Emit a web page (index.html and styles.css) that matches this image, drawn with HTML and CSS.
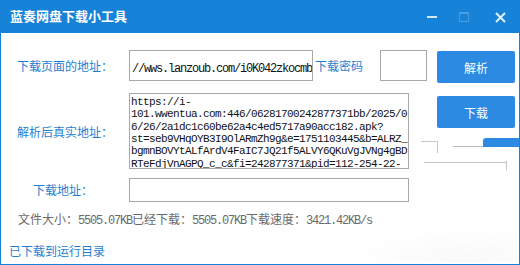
FILE: index.html
```html
<!DOCTYPE html>
<html lang="zh-CN">
<head>
<meta charset="utf-8">
<title>蓝奏网盘下载小工具</title>
<link rel="stylesheet" href="styles.css">
</head>
<body>
<div class="window">
  <header class="titlebar">
    <span class="title">蓝奏网盘下载小工具</span>
    <div class="controls">
      <svg class="ctl ctl-min" width="10" height="10" viewBox="0 0 10 10"><rect x="0" y="4" width="10" height="2" fill="#d3e8f8"/></svg>
      <svg class="ctl ctl-max" width="10" height="10" viewBox="0 0 10 10"><rect x="0.5" y="0.5" width="9" height="9" fill="none" stroke="#4b9de0"/><rect x="0" y="0" width="10" height="2" fill="#4b9de0"/></svg>
      <svg class="ctl ctl-close" width="11" height="11" viewBox="0 0 11 11"><path d="M1 1 L10 10 M10 1 L1 10" stroke="#e2f1fc" stroke-width="2"/></svg>
    </div>
  </header>
  <main class="content">
    <div class="row row-url">
      <span class="label label-wide">下载页面的地址：</span>
      <div class="field field-url"><span class="mono">//wws.lanzoub.com/i0K042zkocmb</span></div>
      <span class="pwd-label">下载密码</span>
      <div class="field field-pwd"></div>
      <button class="btn btn-parse">解析</button>
    </div>
    <div class="row row-real">
      <span class="label label-wide">解析后真实地址：</span>
      <div class="field field-real mono-small">https://i-<br>101.wwentua.com:446/06281700242877371bb/2025/0<br>6/26/2a1dc1c60be62a4c4ed5717a90acc182.apk?<br>st=seb9VHqOYB3I9OlARmZh9g&amp;e=1751103445&amp;b=ALRZ_<br>bgmnBOVYtALfArdV4FaIC7JQ21f5ALVY6QKuVgJVNg4gBD<br>RTeFdjVnAGPQ_c_c&amp;fi=242877371&amp;pid=112-254-22-</div>
      <button class="btn btn-download">下载</button>
    </div>
    <div class="row row-dl">
      <span class="label label-short">下载地址：</span>
      <div class="field field-dl"></div>
    </div>
    <div class="status">文件大小：<span class="mono">5505.07KB</span>已经下载：<span class="mono">5505.07KB</span>下载速度：<span class="mono">3421.42KB/s</span></div>
    <a class="link">已下载到运行目录</a>
  </main>
  <div class="ghost">
    <div class="g g-blue"></div>
    <div class="g g-h1"></div>
    <div class="g g-v1"></div>
    <div class="g g-h2"></div>
    <div class="g g-h3"></div>
    <div class="g g-v2"></div>
    <div class="g g-shade"></div>
  </div>
</div>
</body>
</html>
```

FILE: styles.css
```css
* { box-sizing: border-box; }
html, body { margin: 0; padding: 0; background: #ffffff; }
body { font-family: "Noto Sans CJK SC", "Liberation Sans", sans-serif; }

.window {
  position: relative;
  width: 520px;
  height: 265px;
  border: 1px solid #1783d8;
  border-top: none;
  background: #ffffff;
  overflow: hidden;
}

.titlebar {
  height: 33px;
  margin: 0 -1px;
  background: #1783d8;
  display: flex;
  align-items: center;
  padding-left: 10px;
}
.title {
  color: #ffffff;
  font-size: 13px;
  font-weight: bold;
  line-height: 16px;
  margin-top: -1px;
}
.controls {
  margin-left: auto;
  display: flex;
  align-items: center;
  padding-right: 14px;
}
.ctl { display: block; }
.ctl-min { margin-right: 22px; margin-top: 1px; }
.ctl-max { margin-right: 26px; }
.ctl-close { margin-top: 1px; }

.content {
  display: flex;
  flex-direction: column;
}

.row { display: flex; align-items: flex-start; }

.label {
  color: #1e7fd2;
  font-size: 12px;
  flex: 0 0 128px;
  white-space: nowrap;
}
.label-wide { padding-left: 16px; }
.label-short { padding-left: 32px; }

.field {
  border: 1px solid #a9a9a9;
  background: #ffffff;
}

.mono {
  font-family: "Liberation Mono", "DejaVu Sans Mono", monospace;
  font-size: 12px;
  letter-spacing: -1.2px;
  color: #111111;
}
.mono-small {
  font-family: "Liberation Mono", "DejaVu Sans Mono", monospace;
  font-size: 11px;
  letter-spacing: -0.6px;
  color: #111111;
}

.row-url { margin-top: 17px; height: 33px; }
.row-url .label { line-height: 31px; }
.field-url {
  width: 184px;
  height: 31px;
  line-height: 29px;
  padding-left: 2px;
  white-space: nowrap;
  overflow: hidden;
}
.pwd-label {
  color: #1e7fd2;
  font-size: 12px;
  line-height: 31px;
  margin-left: 2px;
  white-space: nowrap;
}
.field-pwd {
  width: 47px;
  height: 31px;
  margin-left: 17px;
}

.btn {
  border: none;
  border-radius: 2px;
  background: #2c8ae2;
  color: #ffffff;
  font-family: "Noto Sans CJK SC", sans-serif;
  font-size: 12px;
  width: 78px;
  height: 32px;
  padding: 0;
}
.btn-parse { margin-left: 10px; margin-top: 1px; }

.row-real { margin-top: 10px; }
.row-real .label { align-self: center; }
.field-real {
  width: 280px;
  height: 76px;
  padding: 2px 0 0 1px;
  line-height: 12.35px;
  white-space: nowrap;
  overflow: hidden;
}
.btn-download { margin-left: 28px; margin-top: 3px; }

.row-dl { margin-top: 9px; }
.row-dl .label { line-height: 24px; }
.field-dl { width: 280px; height: 24px; }

.status {
  margin-top: 9px;
  padding-left: 17px;
  color: #6a6a6a;
  font-size: 12px;
  line-height: 16px;
  white-space: nowrap;
}
.status .mono { color: #6a6a6a; }

.link {
  margin-top: 14px;
  padding-left: 8px;
  color: #1e7fd2;
  font-size: 12px;
  line-height: 16px;
}

/* ghost redraw artifacts over the right edge */
.ghost { position: absolute; inset: 0; pointer-events: none; }
.g { position: absolute; }
.g-blue { left: 482px; top: 138px; width: 40px; height: 9px; background: #2c8ae2; border-radius: 3px 0 0 0; }
.g-h1 { left: 420px; top: 141px; width: 16px; height: 1px; background: #c8c8c8; }
.g-v1 { left: 436px; top: 141px; width: 1px; height: 12px; background: #c8c8c8; }
.g-h2 { left: 452px; top: 146px; width: 30px; height: 1px; background: #bdbdbd; }
.g-h3 { left: 423px; top: 162px; width: 82px; height: 1px; background: #c4c4c4; }
.g-v2 { left: 505px; top: 161px; width: 1px; height: 9px; background: #c4c4c4; }
.g-shade { left: 340px; top: 228px; width: 178px; height: 35px; background: radial-gradient(ellipse at 70% 80%, rgba(0,0,0,0.025), rgba(0,0,0,0) 70%); }
```
